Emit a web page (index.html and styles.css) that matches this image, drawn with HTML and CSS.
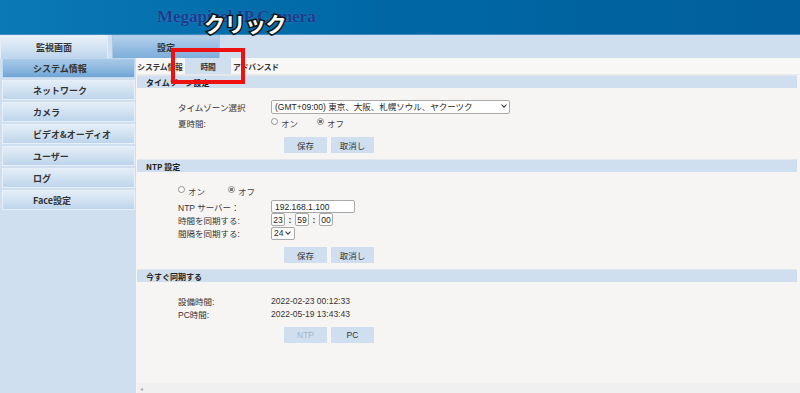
FILE: index.html
```html
<!DOCTYPE html>
<html lang="ja">
  <head>
    <meta charset="UTF-8" />
    <title>Megapixel IP Camera</title>
    <link rel="stylesheet" href="styles.css">
  </head>
  <body>
    <div class="page">
      <header class="top">
        <h1 class="brand">Megapixel IP Camera</h1>
      </header>

      <nav class="main-tabs">
        <div class="main-tab">監視画面</div>
        <div class="main-tab active">設定</div>
      </nav>

      <div class="body">
        <aside class="side">
          <div class="side-item active">システム情報</div>
          <div class="side-item">ネットワーク</div>
          <div class="side-item">カメラ</div>
          <div class="side-item">ビデオ&amp;オーディオ</div>
          <div class="side-item">ユーザー</div>
          <div class="side-item">ログ</div>
          <div class="side-item">Face設定</div>
        </aside>

        <main class="content">
          <div class="sub-tabs">
            <div class="sub-tab">システム情報</div>
            <div class="sub-tab active">時間</div>
            <div class="sub-tab">アドバンスド</div>
          </div>

          <section class="panel">
            <h3 class="panel-title">タイムゾーン設定</h3>
            <div class="panel-body tz">
              <div class="row">
                <label class="lbl">タイムゾーン選択</label>
                <span class="sel wide">
                  <select>
                    <option>(GMT+09:00) 東京、大阪、札幌ソウル、ヤクーツク</option>
                  </select>
                </span>
              </div>
              <div class="row">
                <span class="lbl">夏時間:</span>
                <label class="radio"><input type="radio" name="dst" /> オン</label>
                <label class="radio"><input type="radio" name="dst" checked /> オフ</label>
              </div>
              <div class="btns">
                <button class="btn">保存</button>
                <button class="btn">取消し</button>
              </div>
            </div>
          </section>

          <section class="panel">
            <h3 class="panel-title">NTP 設定</h3>
            <div class="panel-body ntp">
              <div class="row radios-only">
                <label class="radio"><input type="radio" name="ntp" /> オン</label>
                <label class="radio"><input type="radio" name="ntp" checked /> オフ</label>
              </div>
              <div class="row short">
                <label class="lbl strong">NTP サーバー：</label>
                <input class="txt server" type="text" value="192.168.1.100" />
              </div>
              <div class="row short">
                <label class="lbl">時間を同期する:</label>
                <input class="txt num" type="text" value="23" />
                <span class="colon">:</span>
                <input class="txt num" type="text" value="59" />
                <span class="colon">:</span>
                <input class="txt num" type="text" value="00" />
              </div>
              <div class="row">
                <label class="lbl">間隔を同期する:</label>
                <span class="sel narrow">
                  <select><option>24</option></select>
                </span>
              </div>
              <div class="btns">
                <button class="btn">保存</button>
                <button class="btn">取消し</button>
              </div>
            </div>
          </section>

          <section class="panel last">
            <h3 class="panel-title">今すぐ同期する</h3>
            <div class="panel-body now">
              <div class="row short">
                <span class="lbl">設備時間:</span>
                <span class="val">2022-02-23 00:12:33</span>
              </div>
              <div class="row short">
                <span class="lbl">PC時間:</span>
                <span class="val">2022-05-19 13:43:43</span>
              </div>
              <div class="btns">
                <button class="btn" disabled>NTP</button>
                <button class="btn">PC</button>
              </div>
            </div>
          </section>

          <div class="hscroll"><span class="arrow">&#9666;</span></div>
        </main>
      </div>

      <!-- annotation overlay -->
      <div class="note">クリック</div>
      <div class="mark"></div>
    </div>
  </body>
</html>
```

FILE: styles.css
```css
body {
  margin: 0;
  font-family: "Liberation Sans", "Noto Sans CJK JP", sans-serif;
  font-size: 8.5px;
  color: #222;
  background-color: #cfdfef;
}

.page {
  position: relative;
  width: 800px;
  height: 393px;
  overflow: hidden;
  display: flex;
  flex-direction: column;
}

/* Header */
.top {
  height: 34px;
  flex: none;
  border-bottom: 1px solid #3f8dc2;
  background: linear-gradient(90deg, #0a79b6 0%, #0068a6 45%, #005f9c 100%);
  display: flex;
  align-items: flex-start;
}

.brand {
  margin: 7px 0 0 157px;
  font-family: "Liberation Serif", serif;
  font-size: 17px;
  font-weight: bold;
  color: #1a3c8c;
  text-shadow: 0 0 2px rgba(90, 150, 210, 0.6);
}

/* Main tabs */
.main-tabs {
  height: 23px;
  flex: none;
  display: flex;
  gap: 4px;
  background-color: #cfdfef;
}

.main-tab {
  width: 106px;
  display: flex;
  align-items: center;
  justify-content: center;
  font-family: "Noto Sans CJK JP", sans-serif;
  font-size: 9px;
  font-weight: bold;
  color: #333;
  border: 1px solid #e6eef7;
  border-bottom: none;
  background: linear-gradient(180deg, #e9f1f9 0%, #d3e3f2 55%, #bcd4ec 100%);
}

.main-tab.active {
  background: linear-gradient(180deg, #b5d0ea 0%, #92bbe1 60%, #7eaedb 100%);
  border-color: #a9c7e5;
}

/* Body */
.body {
  flex: 1;
  display: flex;
  min-height: 0;
}

.side {
  width: 136px;
  flex: none;
  display: flex;
  flex-direction: column;
}

.side-item {
  height: 18px;
  margin: 0 1px 2px 2px;
  padding-left: 30px;
  display: flex;
  align-items: center;
  font-family: "Noto Sans CJK JP", sans-serif;
  font-size: 9px;
  font-weight: bold;
  color: #333;
  border: 1px solid #e7eff8;
  background: linear-gradient(180deg, #e3edf7 0%, #d2e2f1 50%, #bdd5ec 100%);
}

.side-item.active {
  background: linear-gradient(180deg, #a9c9e8 0%, #8db8e0 55%, #6ea4d6 100%);
  border-color: #c3d8ee;
}

.content {
  flex: 1;
  display: flex;
  flex-direction: column;
  background-color: #f7f5f3;
  padding-left: 1px;
}

.sub-tabs {
  height: 16px;
  flex: none;
  display: flex;
  gap: 2px;
  background-color: #f8f7f5;
  border-bottom: 1px solid #e9e9e9;
}

.sub-tab {
  width: 46px;
  display: flex;
  align-items: center;
  justify-content: center;
  white-space: nowrap;
  font-family: "Noto Sans CJK JP", sans-serif;
  font-size: 7.8px;
  font-weight: bold;
  letter-spacing: -0.2px;
  color: #333;
}

.sub-tab.active {
  background-color: #cfdfef;
}

.panel {
  margin-right: 3px;
}

.panel-title {
  margin: 0;
  height: 12px;
  padding-left: 9px;
  display: flex;
  align-items: center;
  font-family: "Noto Sans CJK JP", sans-serif;
  font-size: 8px;
  font-weight: bold;
  color: #222;
  background-color: #cfdfef;
  border-top: 1px solid #e3e6ea;
}

.panel-body {
  padding: 12px 0 6px 41px;
  display: flex;
  flex-direction: column;
}

.row {
  height: 14px;
  display: flex;
  align-items: center;
  margin-bottom: 2px;
  color: #333;
}

.row.short {
  height: 13px;
  margin-bottom: 0;
}

.lbl {
  width: 93px;
  flex: none;
}

.radio {
  width: 46px;
  display: flex;
  align-items: center;
  gap: 2px;
  color: #444;
}

.radios-only .radio {
  width: 50px;
}

.radio input {
  appearance: none;
  margin: 0 1px 4px 0;
  width: 7px;
  height: 7px;
  border: 1px solid #8e8e8e;
  border-radius: 50%;
  background-color: #fff;
  box-sizing: border-box;
}

.radio input:checked {
  background: radial-gradient(circle, #777 0 1.6px, #fff 2px);
}

input.txt,
.sel select {
  font-family: "Liberation Sans", "Noto Sans CJK JP", sans-serif;
  font-size: 8.5px;
  color: #222;
  background-color: #fff;
  border: 1px solid #a9a9a9;
  border-radius: 2px;
  box-sizing: border-box;
  outline: none;
}

.sel {
  position: relative;
  display: inline-flex;
}

.sel select {
  appearance: none;
  padding: 0 12px 0 3px;
  height: 14px;
}

.sel::after {
  content: "";
  position: absolute;
  right: 4px;
  top: 3px;
  width: 3px;
  height: 3px;
  border-right: 1px solid #333;
  border-bottom: 1px solid #333;
  transform: rotate(45deg);
}

.sel.wide select {
  width: 239px;
}

.sel.narrow select {
  width: 24px;
  height: 13px;
  padding: 0 10px 0 2px;
}

.sel.narrow::after {
  right: 5px;
  top: 3px;
}

.txt {
  height: 13px;
  padding: 0 3px;
}

.txt.server {
  width: 84px;
}

.txt.num {
  width: 14px;
  padding: 0;
  text-align: center;
}

.colon {
  width: 10px;
  text-align: center;
  font-weight: bold;
}

.btns {
  margin-top: 5px;
  padding-left: 106px;
  display: flex;
  gap: 4px;
}

.ntp .btns {
  margin-top: 5px;
}

.now .btns {
  margin-top: 7px;
}

.btn {
  width: 43px;
  height: 16px;
  padding: 0;
  border: none;
  background-color: #cfdfef;
  font-family: "Liberation Sans", "Noto Sans CJK JP", sans-serif;
  font-size: 8.5px;
  color: #333;
}

.btn:disabled {
  color: #a8b3c0;
}

.val {
  color: #333;
}

.panel.last {
  flex: 1;
}

.hscroll {
  height: 10px;
  flex: none;
  background-color: #f0f0f0;
  display: flex;
  align-items: center;
}

.hscroll .arrow {
  margin-left: 3px;
  font-size: 6px;
  color: #aaa;
}

/* Annotation */
.note {
  position: absolute;
  left: 204px;
  top: 8px;
  font-family: "Noto Sans CJK JP", sans-serif;
  font-size: 21px;
  font-weight: bold;
  color: #fff;
  letter-spacing: -0.5px;
  -webkit-text-stroke: 3px #111;
  paint-order: stroke fill;
}

.mark {
  position: absolute;
  left: 171px;
  top: 48px;
  width: 66px;
  height: 28px;
  border: 4px solid #ee1111;
}
```
